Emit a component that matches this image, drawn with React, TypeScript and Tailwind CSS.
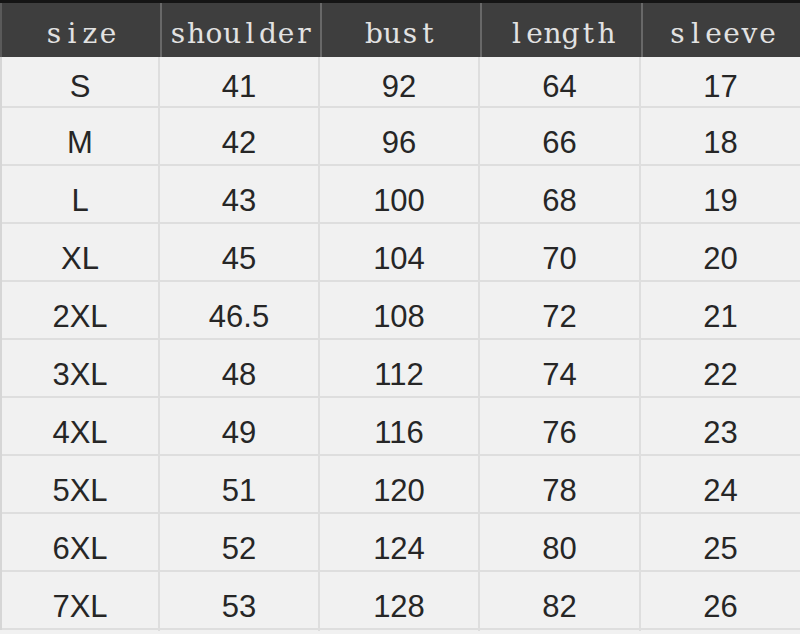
import React from "react";

const headers = ["size", "shoulder", "bust", "length", "sleeve"];
const rows: string[][] = [
  ["S", "41", "92", "64", "17"],
  ["M", "42", "96", "66", "18"],
  ["L", "43", "100", "68", "19"],
  ["XL", "45", "104", "70", "20"],
  ["2XL", "46.5", "108", "72", "21"],
  ["3XL", "48", "112", "74", "22"],
  ["4XL", "49", "116", "76", "23"],
  ["5XL", "51", "120", "78", "24"],
  ["6XL", "52", "124", "80", "25"],
  ["7XL", "53", "128", "82", "26"],
];

function MonoSerif({ text }: { text: string }) {
  return (
    <span className="flex">
      {text.split("").map((ch, i) => (
        <span key={i} className="inline-block w-[18px] text-center">
          {ch}
        </span>
      ))}
    </span>
  );
}

export default function App() {
  return (
    <div className="w-[800px] h-[634px] overflow-hidden bg-[#f1f1f1] flex flex-col">
      <div className="h-[3px] bg-[#141414]" />
      <div className="grid grid-cols-[160px_160px_160px_161px_159px] h-[54px] bg-[#3e3e3e] border-l-2 border-[#5a5a5a]">
        {headers.map((h, i) => (
          <div
            key={h}
            className={`flex items-center justify-center pt-[7px] text-[28px] text-[#e2e2e2] ${i < 4 ? "border-r-2 border-[#686868]" : ""}`}
            style={{ fontFamily: '"DejaVu Serif", "Liberation Serif", serif' }}
          >
            <MonoSerif text={h} />
          </div>
        ))}
      </div>
      <div className="flex flex-col border-l-2 border-[#d6d6d6]">
        {rows.map((r, ri) => (
          <div
            key={r[0]}
            className={`grid grid-cols-[158px_160px_160px_161px_159px] border-b-2 border-[#dedede] ${ri === 0 ? "h-[51px]" : "h-[58px]"}`}
          >
            {r.map((c, ci) => (
              <div
                key={ci}
                className={`flex items-center justify-center text-[31px] text-[#262626] ${ri === 0 ? "pt-[7px]" : "pt-[12px]"} ${ci < 4 ? "border-r-2 border-[#dedede]" : ""}`}
                style={{ fontFamily: '"Liberation Sans", Arial, sans-serif' }}
              >
                {c}
              </div>
            ))}
          </div>
        ))}
      </div>
    </div>
  );
}
